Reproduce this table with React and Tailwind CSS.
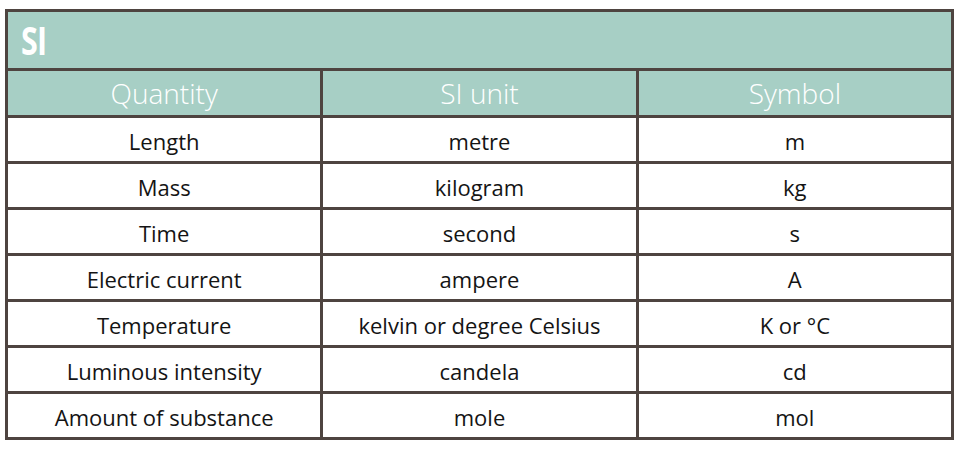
import React from 'react';

const rows = [
    ['Length', 'metre', 'm'],
    ['Mass', 'kilogram', 'kg'],
    ['Time', 'second', 's'],
    ['Electric current', 'ampere', 'A'],
    ['Temperature', 'kelvin or degree Celsius', 'K or °C'],
    ['Luminous intensity', 'candela', 'cd'],
    ['Amount of substance', 'mole', 'mol'],
];

const App = () => {
    return (
        <div className="min-h-screen bg-white pt-[9px] pl-[5px]" style={{ fontFamily: '"Open Sans", "Noto Sans", sans-serif' }}>
            <table className="w-[949px] table-fixed border-collapse border-[3px] border-[#4e4440]">
                <thead>
                    <tr className="h-[59px] bg-[#a7cfc5]">
                        <th colSpan={3} className="border-[3px] border-[#4e4440] pl-[13px] text-left align-middle">
                            <span className="inline-block origin-left scale-x-[0.76] text-[40px] font-bold leading-none tracking-[-1px] text-white">SI</span>
                        </th>
                    </tr>
                    <tr className="h-[47px] bg-[#a7cfc5]">
                        <th className="border-[3px] border-[#4e4440] text-[28px] font-light text-white">Quantity</th>
                        <th className="border-[3px] border-[#4e4440] text-[28px] font-light text-white">SI unit</th>
                        <th className="border-[3px] border-[#4e4440] text-[28px] font-light text-white">Symbol</th>
                    </tr>
                </thead>
                <tbody>
                    {rows.map((row, index) => (
                        <tr key={index} className="h-[46px]">
                            {row.map((cell, i) => (
                                <td key={i} className="border-[3px] border-[#4e4440] pt-[2px] text-center text-[22px] leading-none text-[#141414]">
                                    {cell}
                                </td>
                            ))}
                        </tr>
                    ))}
                </tbody>
            </table>
        </div>
    );
};

export default App;
